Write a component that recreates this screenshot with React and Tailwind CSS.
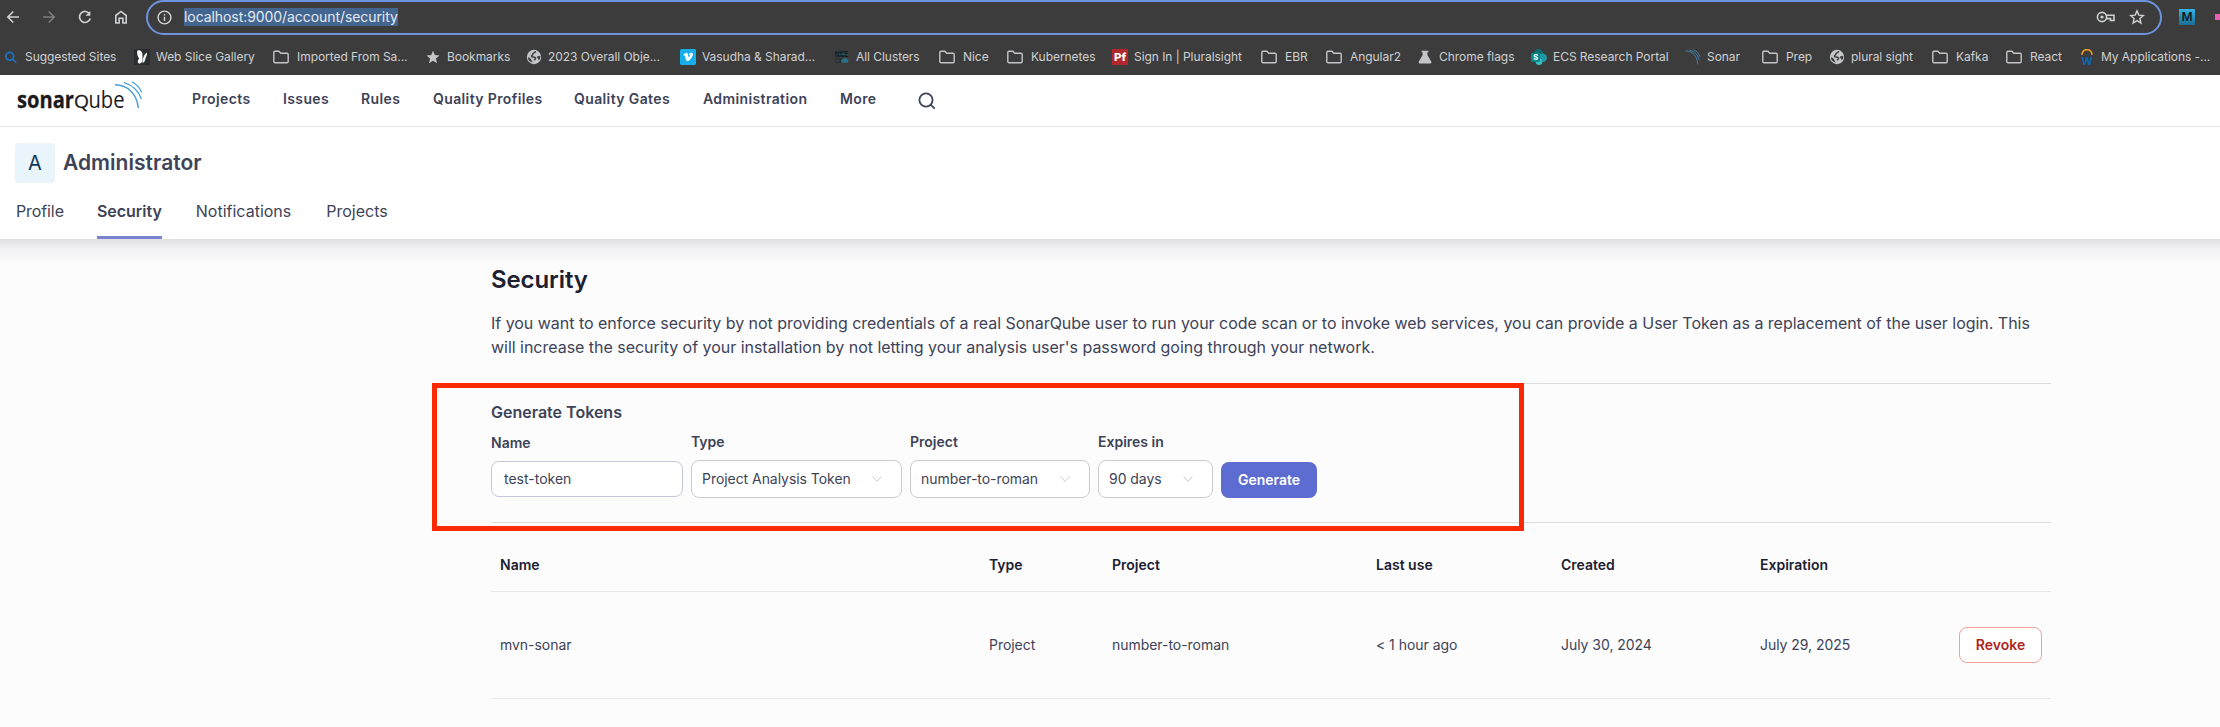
const UI_FONT = "font-['Inter',sans-serif]";

function Folder() {
  return (
    <svg width="16" height="16" viewBox="0 0 16 16" fill="none" stroke="#c3c5c8" strokeWidth="1.4" strokeLinejoin="round">
      <path d="M.8 3.6c0-.8.5-1.3 1.2-1.3h4l1.7 1.9H14c.7 0 1.2.5 1.2 1.2v7.100c0 .7-.5 1.200-1.200 1.200H2c-.7 0-1.200-.5-1.200-1.200z" />
    </svg>
  );
}

function Globe() {
  return (
    <svg width="16" height="16" viewBox="0 0 16 16">
      <circle cx="8" cy="8" r="7.2" fill="#c3c5c8" />
      <path d="M9.600 2.200c-.3 1.700-1.300 1.500-2.200 1.900-.8.5-.3 1.600-1.100 2-.8.300-1 .6-.6 1.500.9.600 3.200-.100 3.800 1.300.4 1.100-1.100 1.300-1.200 2.500" fill="none" stroke="#3c3c3c" strokeWidth="1.500" />
      <path d="M1.800 8.200c1.500.2 3.500 1.700 3.700 3 .1 1 .9 1 1 2.200-2.600-.4-4.500-2.500-4.700-5.200zM11 7.400l3.300-.7c.2 1.700-.4 3.500-1.500 4.600-.6-.4-.3-1.500-1-2-.6-.4-1-.9-.8-1.900z" fill="#3c3c3c" />
    </svg>
  );
}

function SearchBlue() {
  return (
    <svg width="16" height="16" viewBox="0 0 16 16" fill="none" stroke="#1f73c4" strokeWidth="1.700">
      <circle cx="6.700" cy="7.300" r="3.900" />
      <path d="M9.600 10.200l3.500 3.300" />
    </svg>
  );
}

function Butterfly() {
  return (
    <svg width="16" height="16" viewBox="0 0 16 16">
      <rect width="16" height="16" fill="#2b2e30" />
      <path d="M3.500 1.500c2.500-1 5 1 5 4.500v5c0 3-3.500 5-4.600 2.500-.6-1.600.6-3 1.300-4C3.500 7.500 2.500 3.500 3.500 1.500z" fill="#fff" />
      <path d="M12.800 3.500c1 2-.8 4-1.300 6-.3 2-1.500 4.500-3 4.300 0-3 1.300-8.300 4.300-10.300z" fill="#f1f1f1" />
    </svg>
  );
}

function StarSolid() {
  return (
    <svg width="16" height="16" viewBox="0 0 16 16">
      <path d="M8 1.800l1.800 4.300 4.700.4-3.600 3.100 1.100 4.600L8 11.700l-4 2.500 1.100-4.600L1.500 6.500l4.700-.4z" fill="#c3c5c8" />
    </svg>
  );
}

function Vimeo() {
  return (
    <svg width="16" height="16" viewBox="0 0 16 16">
      <rect width="16" height="16" rx="1.500" fill="#17aeea" />
      <path d="M13 5.300c0 1-.8 2.400-2.100 4.100-1.400 1.800-2.600 2.700-3.500 2.700-.6 0-1.100-.5-1.500-1.600L5 7.300c-.3-1-.5-1.200-1.300-.6l-.5-.7c1-.9 2.400-2.200 3.200-2.200.8 0 1.300.6 1.500 1.700.5 3 .7 3.400 1.500 2 .6-1 .9-1.800-.6-1.500.5-1.600 1.400-2.300 2.600-2.300 1 0 1.600.500 1.600 1.600z" fill="#fff" />
    </svg>
  );
}

function NiceLogo() {
  return (
    <svg className="overflow-visible" width="16" height="16" viewBox="0 0 16 16">
      <text x="1" y="7.600" fontFamily="Inter, sans-serif" fontWeight="800" fontSize="7" textLength="13" lengthAdjust="spacingAndGlyphs" fill="#0c1a1f">NICE</text>
      <path d="M2 5.300h12" stroke="#1b7086" strokeWidth=".5" />
      <text x="1" y="13.800" fontFamily="Inter, sans-serif" fontWeight="500" fontSize="6" textLength="7" lengthAdjust="spacingAndGlyphs" fill="#17252a">CX</text>
      <path d="M8 13.800c-1.500-1.500-.5-3.500 1-3.500.6-1.800 3.600-1.800 4 0 1.800.300 1.800 3 .5 3.500z" fill="#2a7184" />
    </svg>
  );
}

function Pluralsight() {
  return (
    <svg width="16" height="16" viewBox="0 0 16 16">
      <rect width="16" height="16" fill="#b0282e" />
      <text x="2" y="12.200" fontFamily="Inter, sans-serif" fontWeight="800" fontSize="11" textLength="12" lengthAdjust="spacingAndGlyphs" fill="#fff">Pf</text>
    </svg>
  );
}

function Flask() {
  return (
    <svg width="16" height="16" viewBox="0 0 16 16">
      <path d="M4.600 1.800h6.800v1.500h-1v2.700l3.900 6.800c.4.800 0 1.600-.9 1.600H2.600c-.9 0-1.300-.8-.9-1.600L5.600 6V3.300h-1z" fill="#c3c5c8" />
    </svg>
  );
}

function SharePoint() {
  return (
    <svg width="16" height="16" viewBox="0 0 16 16">
      <circle cx="7.500" cy="4.800" r="4.700" fill="#0c6c70" />
      <circle cx="11.800" cy="8.800" r="4.200" fill="#1b9aa0" />
      <circle cx="8" cy="12.700" r="3.300" fill="#37c0c8" />
      <rect x="0" y="4" width="9" height="9" rx=".8" fill="#04878b" />
      <text x="2.200" y="11.200" fontFamily="Inter, sans-serif" fontWeight="800" fontSize="7.500" fill="#fff">S</text>
    </svg>
  );
}

function SonarWaves() {
  return (
    <svg width="16" height="16" viewBox="0 0 16 16" fill="none" stroke="#4283ad" strokeWidth=".9">
      <path d="M.5 1.800C8 2 12.500 7.500 12.700 15.500" />
      <path d="M4.500 1.200c5 1 8.800 4.800 9.600 10" />
      <path d="M8.500.8c3 1.200 5.500 3.500 6.300 6.800" />
    </svg>
  );
}

function Workday() {
  return (
    <svg className="overflow-visible" width="16" height="16" viewBox="0 0 16 16">
      <path d="M3 5.700C3.500-.9 12.500-.9 13 5.700" fill="none" stroke="#f39a22" strokeWidth="1.700" />
      <text x="2.300" y="15.500" fontFamily="Inter, sans-serif" fontWeight="700" fontSize="11" textLength="11.500" lengthAdjust="spacingAndGlyphs" fill="#0f62b8">W</text>
    </svg>
  );
}

const bookmarks = [
  { Icon: SearchBlue, label: "Suggested Sites", cls: "w-[131px] gap-1.5" },
  { Icon: Butterfly, label: "Web Slice Gallery", cls: "w-[139px] gap-1.5" },
  { Icon: Folder, label: "Imported From Sa...", cls: "w-[152px] gap-2" },
  { Icon: StarSolid, label: "Bookmarks", cls: "w-[101px] gap-1.5" },
  { Icon: Globe, label: "2023 Overall Obje...", cls: "w-[154px] gap-1.5" },
  { Icon: Vimeo, label: "Vasudha & Sharad...", cls: "w-[154px] gap-1.5" },
  { Icon: NiceLogo, label: "All Clusters", cls: "w-[105px] gap-1.5" },
  { Icon: Folder, label: "Nice", cls: "w-[68px] gap-2" },
  { Icon: Folder, label: "Kubernetes", cls: "w-[105px] gap-2" },
  { Icon: Pluralsight, label: "Sign In | Pluralsight", cls: "w-[149px] gap-1.5" },
  { Icon: Folder, label: "EBR", cls: "w-[65px] gap-2" },
  { Icon: Folder, label: "Angular2", cls: "w-[91px] gap-2" },
  { Icon: Flask, label: "Chrome flags", cls: "w-[114px] gap-1.5" },
  { Icon: SharePoint, label: "ECS Research Portal", cls: "w-[154px] gap-1.5" },
  { Icon: SonarWaves, label: "Sonar", cls: "w-[77px] gap-1.5" },
  { Icon: Folder, label: "Prep", cls: "w-[67px] gap-2" },
  { Icon: Globe, label: "plural sight", cls: "w-[103px] gap-1.5" },
  { Icon: Folder, label: "Kafka", cls: "w-[74px] gap-2" },
  { Icon: Folder, label: "React", cls: "w-[73px] gap-2" },
  { Icon: Workday, label: "My Applications -...", cls: "w-[135px] gap-1.5" },
];

function BrowserChrome() {
  return (
    <header className="h-[75px] overflow-hidden bg-[#3c3c3c]">
      <div className="flex h-[35px] items-start">
        <div className="flex h-[34px] w-[146px] shrink-0 items-center gap-5 pl-[5px]">
          <svg width="16" height="16" viewBox="0 0 16 16" fill="none" stroke="#cfd0d2" strokeWidth="1.600">
            <path d="M14 8H3M8.300 2.500L2.800 8l5.500 5.500" />
          </svg>
          <svg width="16" height="16" viewBox="0 0 16 16" fill="none" stroke="#7d7e80" strokeWidth="1.600">
            <path d="M2 8h11M7.700 2.500L13.200 8l-5.500 5.500" />
          </svg>
          <svg width="16" height="16" viewBox="0 0 16 16" fill="none" stroke="#cfd0d2" strokeWidth="1.700">
            <path d="M12.700 5.100A5.500 5.500 0 1 0 13.300 9.500" />
            <path d="M13.300 1.900v4.900H8.400z" fill="#cfd0d2" stroke="none" />
          </svg>
          <svg width="16" height="16" viewBox="0 0 16 16" fill="none" stroke="#cfd0d2" strokeWidth="1.600">
            <path d="M2.800 14V6.500L8 2.400l5.200 4.100V14H9.900V9.300H6.100V14z" />
          </svg>
        </div>
        <div className="flex h-[35px] w-[2016px] shrink-0 items-center rounded-full border-2 border-[#6d93de] pr-[15px] pb-px pl-[9px]">
          <svg width="15" height="15" viewBox="0 0 15 15" fill="none" stroke="#d5d6d8" strokeWidth="1.400">
            <circle cx="7.500" cy="7.500" r="6.400" />
            <path d="M7.500 6.700v4.300M7.500 3.900v1.500" />
          </svg>
          <span className="ml-3 bg-[#436690] text-[14px] leading-[18px] tracking-[-0.07px] text-[#e6eaf0]">
            localhost:9000/account/security
          </span>
          <div className="ml-auto flex items-center gap-[14px]">
            <svg width="19" height="14" viewBox="0 0 19 14" fill="none" stroke="#cfd0d2" strokeWidth="1.600">
              <circle cx="6" cy="7" r="4.600" />
              <circle cx="6" cy="7" r="1.600" fill="#cfd0d2" stroke="none" />
              <path d="M10.500 5.200h7.500v5.300h-3.500V8.600h-4" />
            </svg>
            <svg width="16" height="16" viewBox="0 0 16 16" fill="none" stroke="#cfd0d2" strokeWidth="1.400">
              <path d="M8 1.900l1.800 4.200 4.500.4-3.400 3 1 4.500L8 11.600 4.100 14l1-4.500-3.400-3 4.500-.4z" />
            </svg>
          </div>
        </div>
        <div className="mt-[9px] ml-[17px] flex size-4 shrink-0 items-center justify-center bg-gradient-to-b from-[#38b2ea] to-[#1c6d92] text-[12px] leading-4 font-semibold text-[#101c24]">
          M
        </div>
        <div className="mt-[14px] ml-[20px] h-[6px] w-[5px] shrink-0 bg-[#e95fb4]" />
      </div>
      <nav className="flex h-11 items-center pl-[3px] text-[12px] tracking-[-0.05px] whitespace-nowrap text-[#cfd0d2]">
        {bookmarks.map(({ Icon, label, cls }) => (
          <div key={label} className={`flex shrink-0 items-center ${cls}`}>
            <Icon />
            <span>{label}</span>
          </div>
        ))}
      </nav>
    </header>
  );
}

function SonarQubeLogo() {
  return (
    <svg width="128" height="36" viewBox="0 0 128 36">
      <text x="1" y="28" fontFamily="'Open Sans', sans-serif" fontWeight="700" fontSize="24" textLength="57" lengthAdjust="spacingAndGlyphs" fill="#1b1b1d" stroke="#1b1b1d" strokeWidth=".3">sonar</text>
      <text x="58" y="28" fontFamily="'Open Sans', sans-serif" fontWeight="400" fontSize="18" textLength="15" lengthAdjust="spacingAndGlyphs" fill="#1b1b1d" stroke="#1b1b1d" strokeWidth=".3">Q</text>
      <text x="72.500" y="28" fontFamily="'Open Sans', sans-serif" fontWeight="400" fontSize="24" textLength="36" lengthAdjust="spacingAndGlyphs" fill="#1b1b1d">ube</text>
      <g fill="none" stroke="#4b9fd5">
        <path d="M99 4.700c13 .3 22 9.300 23.300 23.300" strokeWidth="1.500" />
        <path d="M108 2.700c8 2.300 14.500 8.300 17.300 16.300" strokeWidth="1.400" />
        <path d="M116 1.700c4.200 2.300 7.700 6 9.700 10.600" strokeWidth="1.200" />
      </g>
    </svg>
  );
}

function Chevron() {
  return (
    <svg width="12" height="12" viewBox="0 0 12 12" fill="none" stroke="#cccdd2" strokeWidth="1">
      <path d="M1.500 3.500L6 8.300l4.500-4.800" />
    </svg>
  );
}

function SelectField({ label, value, width }) {
  return (
    <div className={`flex flex-col gap-2 ${width}`}>
      <label className="text-sm leading-5 font-semibold">{label}</label>
      <div className="flex h-[38px] items-center justify-between rounded-lg border border-[#cccccc] bg-white pr-[18px] pl-[10px] text-sm">
        <span className="tracking-[-0.05px]">{value}</span>
        <Chevron />
      </div>
    </div>
  );
}

const columns = ["w-[489px]", "w-[123px]", "w-[264px]", "w-[185px]", "w-[199px]"];
const headings = ["Name", "Type", "Project", "Last use", "Created", "Expiration"];
const token = ["mvn-sonar", "Project", "number-to-roman", "< 1 hour ago", "July 30, 2024", "July 29, 2025"];

export default function App() {
  return (
    <div className={`h-[727px] w-[2220px] overflow-hidden bg-[#fcfcfd] text-[#3e4357] ${UI_FONT}`}>
      <BrowserChrome />

      <div className="flex h-[52px] items-center border-b border-[#e6e6e8] bg-white pl-4">
        <div className="mb-[5px] w-[176px] shrink-0">
          <SonarQubeLogo />
        </div>
        <nav className="mb-[3px] flex text-sm font-semibold tracking-[0.38px] whitespace-nowrap">
          <a className="w-[91px]">Projects</a>
          <a className="w-[78px]">Issues</a>
          <a className="w-[72px]">Rules</a>
          <a className="w-[141px]">Quality Profiles</a>
          <a className="w-[129px]">Quality Gates</a>
          <a className="w-[137px]">Administration</a>
          <a className="w-[78px]">More</a>
        </nav>
        <svg className="mt-px" width="18" height="18" viewBox="0 0 18 18" fill="none" stroke="#3e4357" strokeWidth="1.800">
          <circle cx="8" cy="8" r="6.600" />
          <path d="M12.700 12.700l4 4" />
        </svg>
      </div>

      <div className="flex h-28 flex-col bg-white pl-[15px]">
        <div className="mt-4 flex h-10 items-center gap-2">
          <div className="flex size-10 items-center justify-center rounded bg-[#e9f4fb] text-xl text-[#11395a]">A</div>
          <h1 className="pb-px text-[21px] leading-7 font-semibold tracking-[0.03px]">Administrator</h1>
        </div>
        <div className="mt-auto ml-px flex h-14 gap-[33px]">
          <a className="h-full pt-4 tracking-[-0.1px]">Profile</a>
          <a className="h-full border-b-[3px] border-[#7b83d1] pt-4 font-semibold tracking-[-0.02px]">Security</a>
          <a className="h-full pt-4 pl-px">Notifications</a>
          <a className="h-full pt-4 pl-0.5">Projects</a>
        </div>
      </div>

      <div className="h-[22px] bg-gradient-to-b from-[#e0e0e3] via-[#f2f2f4] via-45% to-[#fafafb]" />

      <main className="ml-[491px] w-[1560px]">
        <h2 className="pt-[3px] text-2xl leading-8 font-semibold tracking-[-0.1px] text-[#1d2030]">Security</h2>
        <p className="mt-[15px] text-base leading-6 tracking-[-0.025px]">
          If you want to enforce security by not providing credentials of a real SonarQube user to run your code scan or to
          invoke web services, you can provide a User Token as a replacement of the user login. This will increase the
          security of your installation by not letting your analysis user's password going through your network.
        </p>

        <section className="relative mt-6 h-[140px] border-y border-[#dddddf] pt-4">
          <h3 className="leading-6 font-semibold">Generate Tokens</h3>
          <div className="mt-2 flex items-center gap-2">
            <div className="flex w-[192px] flex-col gap-2">
              <label className="text-sm leading-5 font-semibold">Name</label>
              <div className="flex h-9 items-center rounded-lg border border-[#c5c8d6] bg-white px-3 text-sm">test-token</div>
            </div>
            <SelectField label="Type" value="Project Analysis Token" width="w-[211px]" />
            <SelectField label="Project" value="number-to-roman" width="w-[180px]" />
            <SelectField label="Expires in" value="90 days" width="w-[115px]" />
            <button className="h-9 w-24 self-end rounded-lg bg-[#5d6cd0] text-sm font-semibold text-white">Generate</button>
          </div>
          <div className="absolute -top-px -left-[59px] h-[148px] w-[1092px] border-5 border-[#fa2a04]" />
        </section>

        <div className="flex h-[69px] border-b border-[#e8e8eb] pt-8 text-sm font-semibold text-[#1d2030]">
          {headings.map((h, i) => (
            <div key={h} className={`shrink-0 px-[9px] ${columns[i] ?? "flex-1"}`}>
              {h}
            </div>
          ))}
        </div>
        <div className="flex h-[107px] items-center border-b border-[#e8e8eb] text-sm">
          {token.map((t, i) => (
            <div key={i} className={`shrink-0 px-[9px] tracking-[-0.04px] ${columns[i] ?? "flex-1"}`}>
              {t}
            </div>
          ))}
          <button className="mr-[9px] h-9 w-[83px] rounded-lg border border-[#f0a19b] bg-white font-semibold text-[#b0231a]">
            Revoke
          </button>
        </div>
      </main>
    </div>
  );
}
